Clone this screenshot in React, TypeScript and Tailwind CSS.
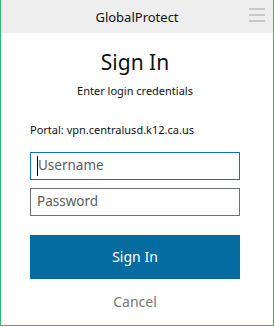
import React from 'react';

const font = { fontFamily: '"Noto Sans", "Open Sans", sans-serif' };

export default function App() {
  return (
    <div
      className="w-[274px] h-[326px] bg-white border-x border-b border-[#2bbd6c] flex flex-col text-[#111]"
      style={font}
    >
      <header className="relative h-[33px] shrink-0 bg-[#eeeeee] flex items-center justify-center">
        <span className="text-[13px] leading-none text-[#111] pt-[1px]">GlobalProtect</span>
        <div className="absolute right-[8px] top-[8px] flex flex-col gap-[4px]">
          <span className="block w-[16px] h-[2px] bg-[#c8c8c8]" />
          <span className="block w-[16px] h-[2px] bg-[#c8c8c8]" />
          <span className="block w-[16px] h-[2px] bg-[#c8c8c8]" />
        </div>
      </header>

      <main className="pl-[29px] w-[239px] flex flex-col">
        <h1 className="mt-[15px] text-[21px] leading-[28px] text-center text-[#111]">Sign In</h1>
        <p className="mt-[7px] text-[11px] leading-[16px] text-center text-[#111]">Enter login credentials</p>
        <p className="mt-[23px] text-[11px] leading-[16px] text-[#111]">Portal: vpn.centralusd.k12.ca.us</p>

        <div className="mt-[14px] h-[28px] border border-[#0c6fd0] flex items-center pl-[6px]">
          <span className="w-px h-[20px] bg-black" />
          <span className="text-[13.5px] leading-none text-[#5c5c5c]">Username</span>
        </div>
        <div className="mt-[8px] h-[28px] border border-[#707070] flex items-center pl-[6px]">
          <span className="text-[13.5px] leading-none text-[#5c5c5c]">Password</span>
        </div>

        <button
          type="button"
          className="mt-[19px] h-[44px] bg-[#046ca1] text-white text-[14px] leading-none"
        >
          Sign In
        </button>
        <button type="button" className="mt-[13px] text-[14px] leading-[20px] text-[#777]">
          Cancel
        </button>
      </main>
    </div>
  );
}
